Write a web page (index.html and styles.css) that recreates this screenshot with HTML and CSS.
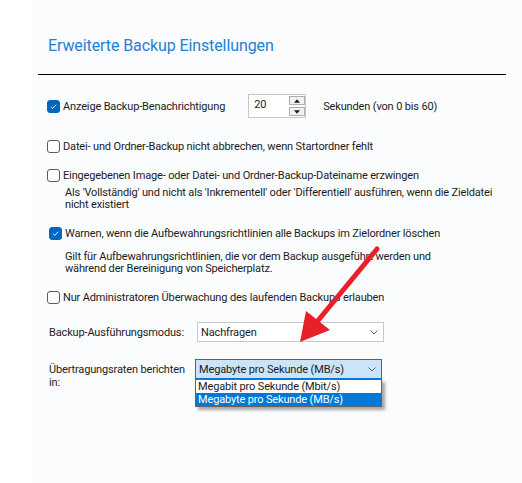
FILE: index.html
```html
<!DOCTYPE html>
<html>
  <head>
    <title>Erweiterte Backup Einstellungen</title>
    <link rel="stylesheet" href="styles.css">
  </head>
  <body>

	<div class="panel">
		<h1 class="title">Erweiterte Backup Einstellungen</h1>
		<hr class="rule" />

		<div class="row row-notify">
			<span class="check on"><svg viewBox="0 0 13 13"><path d="M3.5 6.8 L5.6 8.8 L9.6 4.4" /></svg></span>
			<span class="label">Anzeige Backup-Benachrichtigung</span>
			<div class="spin">
				<span class="spin-value">20</span>
				<div class="spin-btns">
					<span class="spin-btn"><svg viewBox="0 0 7 4"><path d="M3.5 0 L7 4 L0 4 Z" /></svg></span>
					<span class="spin-btn"><svg viewBox="0 0 7 4"><path d="M0 0 L7 0 L3.5 4 Z" /></svg></span>
				</div>
			</div>
			<span class="unit">Sekunden (von 0 bis 60)</span>
		</div>

		<div class="row row-abort">
			<span class="check"></span>
			<span class="label">Datei- und Ordner-Backup nicht abbrechen, wenn Startordner fehlt</span>
		</div>

		<div class="row row-force">
			<span class="check"></span>
			<span class="label">Eingegebenen Image- oder Datei- und Ordner-Backup-Dateiname erzwingen</span>
		</div>
		<p class="hint hint-force">Als 'Vollständig' und nicht als 'Inkrementell' oder 'Differentiell' ausführen, wenn die Zieldatei nicht existiert</p>

		<div class="row row-warn">
			<span class="check on"><svg viewBox="0 0 13 13"><path d="M3.5 6.8 L5.6 8.8 L9.6 4.4" /></svg></span>
			<span class="label">Warnen, wenn die Aufbewahrungsrichtlinien alle Backups im Zielordner löschen</span>
		</div>
		<p class="hint hint-warn">Gilt für Aufbewahrungsrichtlinien, die vor dem Backup ausgeführt werden und während der Bereinigung von Speicherplatz.</p>

		<div class="row row-admin">
			<span class="check"></span>
			<span class="label">Nur Administratoren Überwachung des laufenden Backups erlauben</span>
		</div>

		<div class="field field-mode">
			<span class="field-label">Backup-Ausführungsmodus:</span>
			<div class="select">
				<span>Nachfragen</span>
				<svg class="chevron" viewBox="0 0 8 5"><path d="M0.5 0.5 L4 4 L7.5 0.5" /></svg>
			</div>
		</div>

		<div class="field field-rate">
			<span class="field-label">Übertragungsraten berichten in:</span>
			<div class="select-wrap">
				<div class="select open">
					<span>Megabyte pro Sekunde (MB/s)</span>
					<svg class="chevron" viewBox="0 0 8 5"><path d="M0.5 0.5 L4 4 L7.5 0.5" /></svg>
				</div>
				<ul class="options">
					<li>Megabit pro Sekunde (Mbit/s)</li>
					<li class="picked">Megabyte pro Sekunde (MB/s)</li>
				</ul>
			</div>
		</div>
	</div>

	<!-- pointer drawn over the form -->
	<svg class="pointer" viewBox="0 0 522 483">
		<line x1="377" y1="249" x2="316" y2="323" />
		<polygon points="300,342 306,311 330,330" />
	</svg>

  </body>
</html>
```

FILE: styles.css
```css
      body { margin: 0; background: #fff; font-family: Roboto, "Liberation Sans", Arial, sans-serif; font-size: 11px; letter-spacing: -0.15px; color: #1b1b1b; }

      .panel { margin-left: 33px; min-height: 483px; background: #fbfcfe; padding: 0 16px 0 14px; box-sizing: border-box; }
      .title { margin: 0; padding: 36px 0 0 1px; font-size: 16px; line-height: 20px; letter-spacing: -0.1px; font-weight: normal; color: #1f80d8; }
      .rule { margin: 18px 0 0 -9px; width: 468px; height: 1px; border: 0; background: #000; }

      .row { display: flex; align-items: center; height: 20px; }
      .row .label { margin-left: 3px; }
      .row-notify { height: 24px; margin-top: 19px; }
      .row-abort { margin-top: 18px; }
      .row-force { margin-top: 9px; }
      .row-warn { margin-top: 12px; padding-left: 2px; }
      .row-admin { margin-top: 12px; }

      .check { width: 11px; height: 11px; border: 1px solid #5b5b5b; border-radius: 3px; background: #fff; flex: none; }
      .check.on { background: #0067c0; border-color: #0067c0; }
      .check svg { display: block; width: 11px; height: 11px; fill: none; stroke: #fff; stroke-width: 1.1; }

      .hint { margin: 2px 0 0 18px; line-height: 12px; width: 432px; }
      .hint-warn { margin-top: 8px; width: 375px; }

      .spin { display: flex; width: 56px; height: 22px; margin-left: 23px; border: 1px solid #c8c8c8; background: #fff; }
      .spin-value { flex: 1; padding: 0 0 0 5px; line-height: 20px; }
      .spin-btns { display: flex; flex-direction: column; justify-content: center; gap: 2px; }
      .spin-btn { width: 14px; height: 7px; border: 1px solid #adadad; background: #f2f2f2; display: flex; align-items: center; justify-content: center; }
      .spin-btn svg { width: 6px; height: 4px; fill: #1b1b1b; }
      .unit { margin-left: 17px; }

      .field { display: flex; }
      .field-label { width: 148px; padding-left: 2px; }
      .field-mode { align-items: center; margin-top: 15px; }
      .field-rate { margin-top: 17px; }
      .field-rate .field-label { margin-top: 4px; line-height: 13px; width: 142px; padding-right: 4px; }

      .select { display: flex; align-items: center; justify-content: space-between; width: 181px; height: 18px; padding: 0 4px 0 0; border: 1px solid #c9c9c9; background: #fff; }
      .select span { padding-left: 3px; }
      .select.open { background: #cce4f7; border-color: #0078d7; }
      .chevron { width: 8px; height: 5px; margin-right: 1px; fill: none; stroke: #606060; stroke-width: 1; }

      .select-wrap { position: relative; }
      .options { position: absolute; top: 20px; left: 0; width: 187px; margin: 0; padding: 0; list-style: none; border: 1px solid #646464; background: #fff; box-shadow: 3px 3px 3px rgba(0, 0, 0, 0.35); box-sizing: border-box; }
      .options li { height: 13px; line-height: 13px; padding-left: 2px; }
      .options li.picked { background: #0078d7; color: #fff; }

      .pointer { position: absolute; top: 0; left: 0; width: 522px; height: 483px; pointer-events: none; }
      .pointer line { stroke: #e8202a; stroke-width: 5; stroke-linecap: round; }
      .pointer polygon { fill: #e8202a; }
```
